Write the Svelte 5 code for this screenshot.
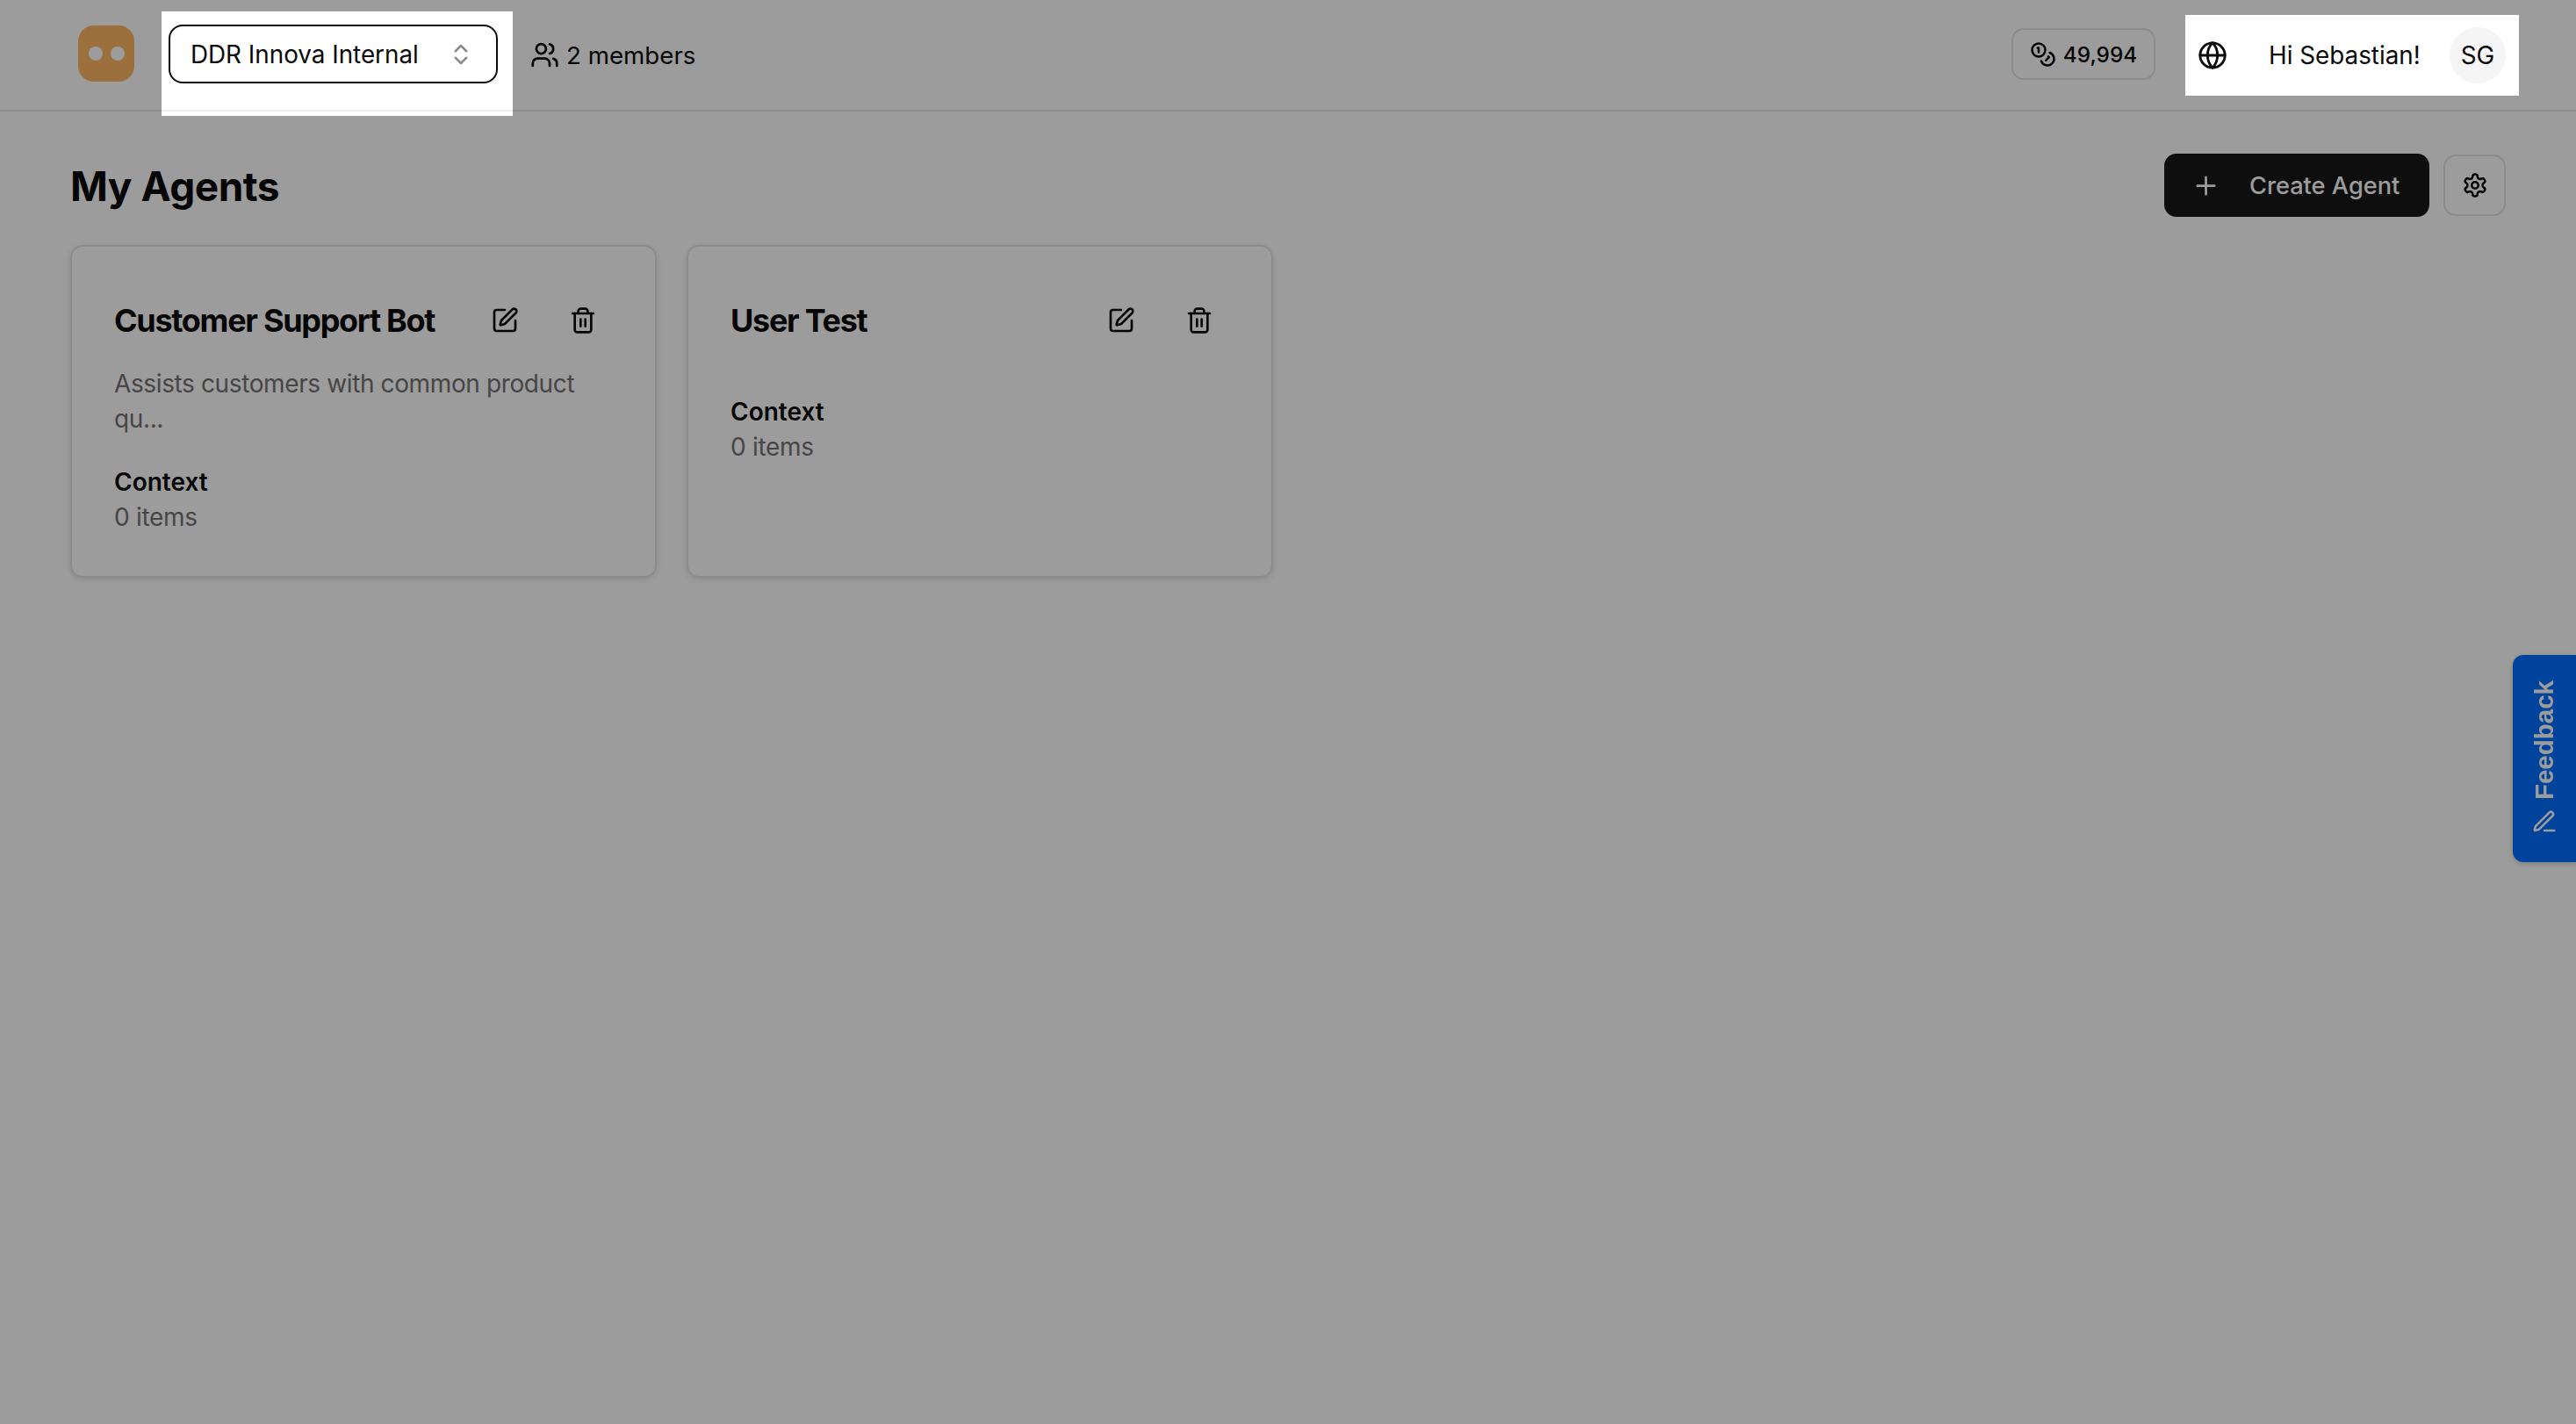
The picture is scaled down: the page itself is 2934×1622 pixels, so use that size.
<script>
  const agents = [
    { name: 'Customer Support Bot', description: 'Assists customers with common product qu...', items: 0 },
    { name: 'User Test', description: '', items: 0 }
  ];
</script>

<div class="page">
  <header class="topbar">
    <div class="logo"><span></span><span></span></div>

    <div class="spot spot-left">
      <button class="org-select">
        <span>DDR Innova Internal</span>
        <svg class="chevrons" viewBox="0 0 24 24"><path d="m7 15 5 5 5-5" /><path d="m7 9 5-5 5 5" /></svg>
      </button>
    </div>

    <div class="members">
      <svg viewBox="0 0 24 24"><path d="M16 21v-2a4 4 0 0 0-4-4H6a4 4 0 0 0-4 4v2" /><circle cx="9" cy="7" r="4" /><path d="M22 21v-2a4 4 0 0 0-3-3.87" /><path d="M16 3.13a4 4 0 0 1 0 7.75" /></svg>
      <span>2 members</span>
    </div>

    <div class="credits">
      <svg viewBox="0 0 24 24"><circle cx="8" cy="8" r="6" /><path d="M18.09 10.37A6 6 0 1 1 10.34 18" /><path d="M7 6h1v4" /><path d="m16.71 13.88.7.71-2.82 2.82" /></svg>
      <span>49,994</span>
    </div>

    <div class="spot spot-right">
      <svg class="globe" viewBox="0 0 24 24"><circle cx="12" cy="12" r="10" /><path d="M12 2a14.5 14.5 0 0 0 0 20 14.5 14.5 0 0 0 0-20" /><path d="M2 12h20" /></svg>
      <span class="greeting">Hi Sebastian!</span>
      <span class="avatar">SG</span>
    </div>
  </header>

  <main class="content">
    <div class="title-row">
      <h1>My Agents</h1>
      <div class="actions">
        <button class="create">
          <svg viewBox="0 0 24 24"><path d="M5 12h14" /><path d="M12 5v14" /></svg>
          <span>Create Agent</span>
        </button>
        <button class="settings" aria-label="Settings">
          <svg viewBox="0 0 24 24"><path d="M12.22 2h-.44a2 2 0 0 0-2 2v.18a2 2 0 0 1-1 1.73l-.43.25a2 2 0 0 1-2 0l-.15-.08a2 2 0 0 0-2.73.73l-.22.38a2 2 0 0 0 .73 2.73l.15.1a2 2 0 0 1 1 1.72v.51a2 2 0 0 1-1 1.74l-.15.09a2 2 0 0 0-.73 2.73l.22.38a2 2 0 0 0 2.73.73l.15-.08a2 2 0 0 1 2 0l.43.25a2 2 0 0 1 1 1.73V20a2 2 0 0 0 2 2h.44a2 2 0 0 0 2-2v-.18a2 2 0 0 1 1-1.73l.43-.25a2 2 0 0 1 2 0l.15.08a2 2 0 0 0 2.73-.73l.22-.39a2 2 0 0 0-.73-2.73l-.15-.08a2 2 0 0 1-1-1.74v-.5a2 2 0 0 1 1-1.74l.15-.09a2 2 0 0 0 .73-2.73l-.22-.38a2 2 0 0 0-2.73-.73l-.15.08a2 2 0 0 1-2 0l-.43-.25a2 2 0 0 1-1-1.73V4a2 2 0 0 0-2-2z" /><circle cx="12" cy="12" r="3" /></svg>
        </button>
      </div>
    </div>

    <div class="grid">
      {#each agents as agent}
        <article class="card">
          <div class="card-head">
            <h2>{agent.name}</h2>
            <div class="card-icons">
              <svg viewBox="0 0 24 24"><path d="M12 3H5a2 2 0 0 0-2 2v14a2 2 0 0 0 2 2h14a2 2 0 0 0 2-2v-7" /><path d="M18.375 2.625a1 1 0 0 1 3 3l-9.013 9.014a2 2 0 0 1-.853.505l-2.873.84a.5.5 0 0 1-.62-.62l.84-2.873a2 2 0 0 1 .506-.852z" /></svg>
              <svg viewBox="0 0 24 24"><path d="M3 6h18" /><path d="M19 6v14c0 1-1 2-2 2H7c-1 0-2-1-2-2V6" /><path d="M8 6V4c0-1 1-2 2-2h4c1 0 2 1 2 2v2" /><line x1="10" x2="10" y1="11" y2="17" /><line x1="14" x2="14" y1="11" y2="17" /></svg>
            </div>
          </div>
          {#if agent.description}
            <p class="desc">{agent.description}</p>
          {/if}
          <div class="context">Context</div>
          <div class="count">{agent.items} items</div>
        </article>
      {/each}
    </div>
  </main>

  <button class="feedback">
    <span>Feedback</span>
    <svg viewBox="0 0 24 24"><path d="M12 20h9" /><path d="M16.376 3.622a1 1 0 0 1 3.002 3.002L7.368 18.635a2 2 0 0 1-.855.506l-2.872.838a.5.5 0 0 1-.62-.62l.838-2.872a2 2 0 0 1 .506-.854z" /></svg>
  </button>

  <div class="dim"></div>
</div>

<style>
  :global(body) {
    margin: 0;
    background: #fff;
  }

  .page {
    min-height: 100vh;
    overflow: hidden;
    font-family: Inter, "Liberation Sans", sans-serif;
    color: #0a0a0a;
  }

  svg {
    fill: none;
    stroke: currentColor;
    stroke-width: 2;
    stroke-linecap: round;
    stroke-linejoin: round;
    flex-shrink: 0;
  }

  button {
    font-family: inherit;
    color: inherit;
    background: none;
    border: none;
    padding: 0;
  }

  .dim {
    position: fixed;
    inset: 0;
    z-index: 10;
    background: rgba(0, 0, 0, 0.388);
  }

  .spot {
    position: relative;
    z-index: 20;
    background: #fff;
    box-sizing: border-box;
  }

  .topbar {
    display: flex;
    align-items: flex-start;
    height: 125px;
    padding-left: 89px;
    border-bottom: 2px solid #e8e8e8;
    box-sizing: content-box;
  }

  .logo {
    width: 64px;
    height: 64px;
    margin-top: 29px;
    border-radius: 18px;
    background: #ffb762;
    display: flex;
    align-items: center;
    justify-content: center;
    gap: 9px;
  }

  .logo span {
    width: 16px;
    height: 16px;
    border-radius: 50%;
    background: #fff;
  }

  .spot-left {
    margin-left: 31px;
    margin-top: 13px;
    height: 119px;
    padding: 15px 17px 0 8px;
  }

  .spot-left::after {
    content: '';
    position: absolute;
    left: 0;
    right: 0;
    top: 112px;
    height: 2px;
    background: #eeeeee;
  }

  .org-select {
    width: 375px;
    height: 67px;
    box-sizing: border-box;
    border: 2.5px solid #0a0a0a;
    border-radius: 16px;
    display: flex;
    align-items: center;
    justify-content: space-between;
    padding: 0 25px 0 23px;
    font-size: 27.8px;
    font-weight: 400;
  }

  .chevrons {
    width: 30px;
    height: 30px;
    color: #8a8a8a;
  }

  .members {
    display: flex;
    align-items: center;
    gap: 8px;
    margin-left: 20px;
    height: 125px;
    font-size: 27.7px;
  }

  .members svg {
    width: 33px;
    height: 33px;
  }

  .credits {
    margin-left: auto;
    margin-top: 32px;
    width: 164px;
    height: 59px;
    box-sizing: border-box;
    border: 2px solid #e4e4e4;
    border-radius: 14px;
    display: flex;
    align-items: center;
    justify-content: center;
    gap: 8px;
    font-size: 24.4px;
    font-weight: 500;
  }

  .credits svg {
    width: 30px;
    height: 30px;
  }

  .spot-right {
    margin-left: 34px;
    margin-right: 65px;
    margin-top: 17px;
    width: 380px;
    height: 92px;
    padding: 0 15px 0 14px;
    display: flex;
    align-items: center;
    font-size: 27.8px;
  }

  .globe {
    width: 34px;
    height: 34px;
  }

  .greeting {
    margin-left: 47px;
    flex: 1;
  }

  .avatar {
    width: 64px;
    height: 64px;
    border-radius: 50%;
    background: #f5f5f5;
    display: flex;
    align-items: center;
    justify-content: center;
  }

  .content {
    padding: 48px 80px 0;
  }

  .title-row {
    display: flex;
    align-items: center;
    justify-content: space-between;
    height: 72px;
  }

  h1 {
    margin: 0;
    padding-top: 2px;
    font-size: 46px;
    font-weight: 700;
    letter-spacing: -0.5px;
  }

  .actions {
    display: flex;
    align-items: center;
    gap: 16px;
  }

  .create {
    width: 302px;
    height: 72px;
    box-sizing: border-box;
    padding-left: 31px;
    border-radius: 14px;
    background: #171717;
    color: #fff;
    display: flex;
    align-items: center;
    gap: 33px;
    font-size: 27.2px;
    font-weight: 500;
  }

  .create svg {
    width: 33px;
    height: 33px;
  }

  .settings {
    width: 71px;
    height: 70px;
    box-sizing: border-box;
    border: 2px solid #e4e4e4;
    border-radius: 14px;
    display: flex;
    align-items: center;
    justify-content: center;
  }

  .settings svg {
    width: 30px;
    height: 30px;
  }

  .grid {
    display: grid;
    grid-template-columns: repeat(4, 1fr);
    gap: 34px;
    margin-top: 32px;
  }

  .card {
    display: flex;
    flex-direction: column;
    box-sizing: border-box;
    padding: 67px 48px 47px;
    border: 2px solid #e4e4e4;
    border-radius: 14px;
    box-shadow: 0 2px 6px rgba(0, 0, 0, 0.12);
  }

  .card-head {
    display: flex;
    align-items: center;
    justify-content: space-between;
    height: 34px;
    margin-bottom: 35px;
  }

  h2 {
    margin: 0;
    font-size: 36px;
    font-weight: 700;
    letter-spacing: -1.3px;
  }

  .card-icons {
    display: flex;
    gap: 57px;
    margin-right: 18px;
  }

  .card-icons svg {
    width: 32px;
    height: 32px;
  }

  .desc {
    margin: 0;
    font-size: 28px;
    line-height: 40px;
    letter-spacing: -0.38px;
    color: #737373;
  }

  .context {
    font-size: 28px;
    line-height: 40px;
    font-weight: 600;
    margin-top: 32px;
  }

  .count {
    font-size: 28px;
    line-height: 40px;
    letter-spacing: -0.3px;
    color: #737373;
  }

  .feedback {
    position: fixed;
    right: 0;
    top: 746px;
    width: 72px;
    height: 236px;
    border-radius: 12px 0 0 12px;
    background: #006eff;
    color: #fff;
    display: flex;
    flex-direction: column;
    align-items: center;
    padding-top: 29px;
    box-sizing: border-box;
    gap: 10px;
    font-family: "Liberation Sans", sans-serif;
    font-size: 29.5px;
    font-weight: 700;
    box-shadow: 0 2px 6px rgba(0, 0, 0, 0.2);
  }

  .feedback span {
    writing-mode: vertical-rl;
    transform: rotate(180deg);
  }

  .feedback svg {
    width: 30px;
    height: 30px;
  }
</style>
